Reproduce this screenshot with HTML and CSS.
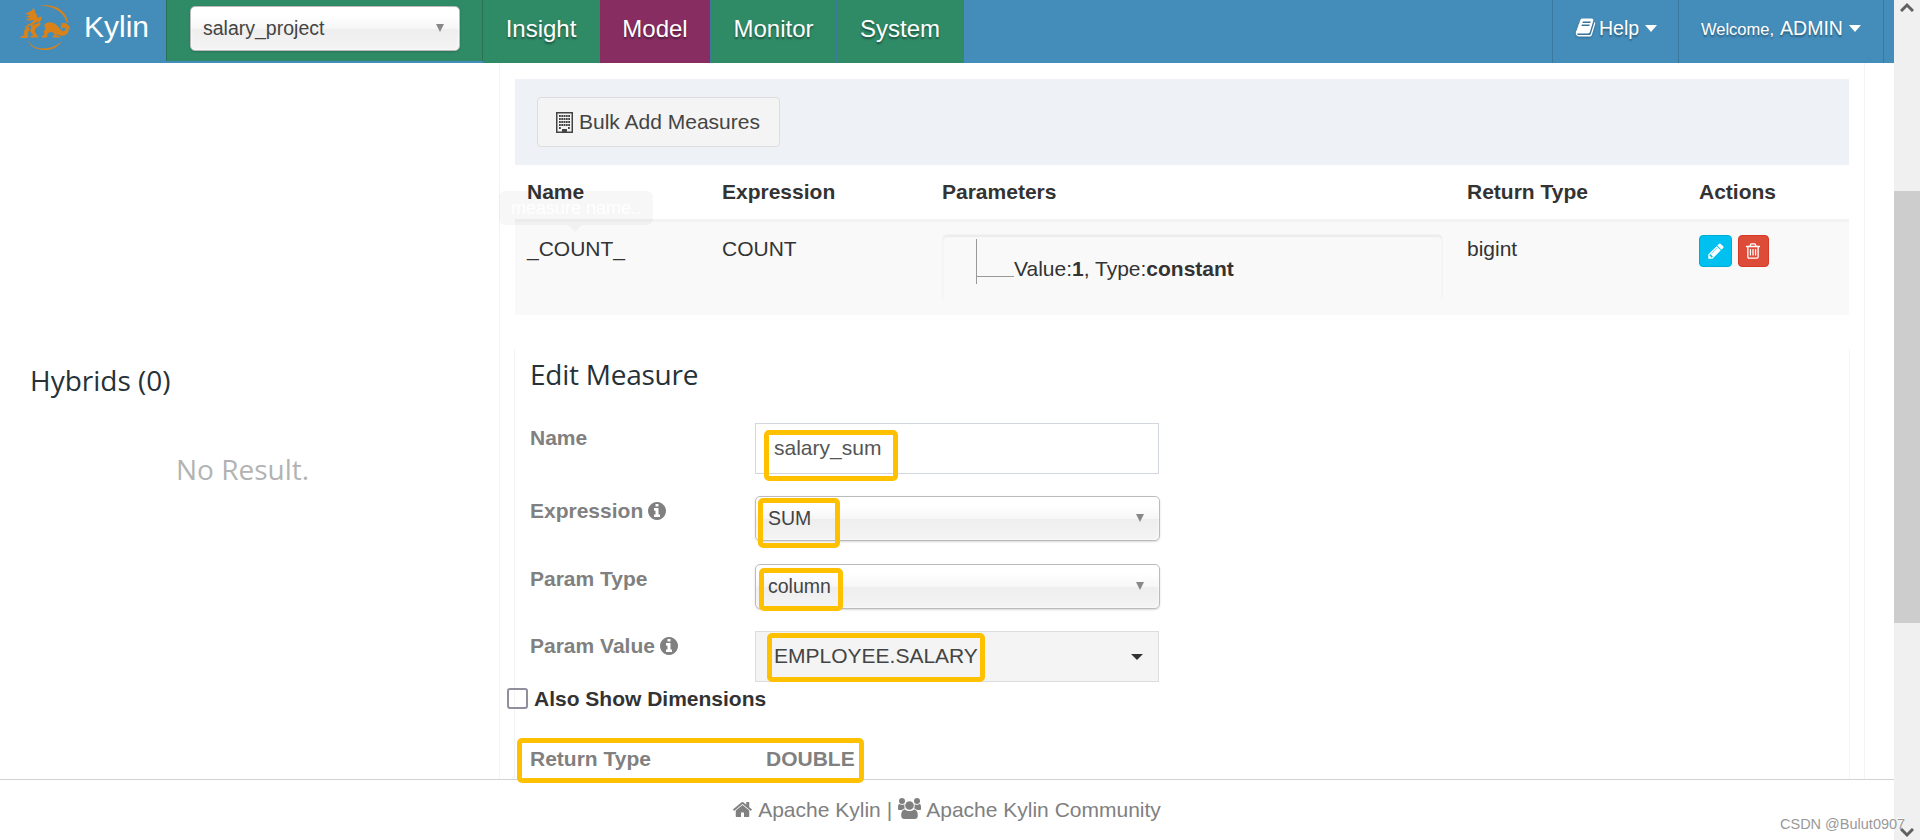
FILE: index.html
```html
<!DOCTYPE html>
<html lang="en">
<head>
    <meta charset="UTF-8">
    <meta name="viewport" content="width=device-width, initial-scale=1.0">
    <title>Kylin</title>
    <link rel="stylesheet" href="styles.css">
</head>
<body>
    <div class="app">
        <div class="page">
            <header class="navbar">
                <a class="brand">
                    <svg class="logo" viewBox="60 13 152 140" fill="#d98219">
                        <path d="M118 19c35-9 72 6 82 37 2 5 4 9 4 13l-5-2C191 38 160 16 118 19z"/>
                        <path d="M82 118c9 23 37 31 62 26 17-3 31-10 40-20-11 20-33 27-53 26-24-1-45-12-49-32z"/>
                        <path d="M76 42l17-8 8-9 5 14c4 5 6 10 5 16l13-5c2 8-2 14-7 17 7 1 4 10-3 13-8 4-12 10-9 17 2 6 9 9 10 16h-24l1-5 8-2c-5-5-9-9-10-15-6 4-8 11-5 17l-3 6H61l2-5 10-3c-3-9 0-18 7-23l-8-1c8-4 11-9 19-11 6-3 9-6 8-11-8 4-16 4-21-2l14-1-15-7 14-3z"/>
                        <path d="M133 74c9-9 24-8 34 0 9 7 13 16 21 20 6 1 9-6 5-10-4-3-8 0-9 4-6-9 2-18 11-15 13 4 13 24 3 31-8 6-20 5-28-2l-1 4 12 5v2h-24l1-5 6-3c-3-7-9-10-16-8-6 3-8 8-6 13l-3 3h-15l1-5 8-3c-3-7-2-14 4-19-3-3-5-8-4-12z"/>
                        <path d="M180 74c5-5 15-6 21-1 7 5 9 12 8 19-5-12-16-18-29-18z"/>
                        <path d="M95 75c10-5 17-10 22-9-4 8-14 8-22 9zM81 79c10 3 8 12 2 18 9-4 13-14 9-20z" fill="#448dba"/>
                    </svg>
                    <span>Kylin</span>
                </a>
                <div class="project-picker">
                    <div class="chosen">
                        <span>salary_project</span>
                        <i class="chosen-arrow"></i>
                    </div>
                </div>
                <nav class="tabs">
                    <a class="tab tab-insight">Insight</a>
                    <a class="tab tab-model active">Model</a>
                    <a class="tab tab-monitor">Monitor</a>
                    <a class="tab tab-system">System</a>
                </nav>
                <div class="user-menu">
                    <a class="menu-help">
                        <svg class="icon" viewBox="0 0 1792 1792"><path d="M1703 478q40 57 18 129l-275 906q-19 64-76.5 107.5t-122.5 43.5h-923q-77 0-148.5-53.5t-99.5-131.5q-24-67-2-127 0-4 3-27t4-37q1-8-3-21.5t-3-19.5q2-11 8-21t16.5-23.5 16.5-23.5q23-38 45-91.5t30-91.5q3-10 .5-30t-.5-28q3-11 17-28t17-23q21-36 42-92t25-90q1-9-2.5-32t.5-28q4-13 22-30.5t22-22.5q19-26 42.5-84.5t27.5-96.5q1-8-3-25.5t-2-26.5q2-8 9-18t18-23 17-21q8-12 16.5-30.5t15-35 16-36 19.5-32 26.5-23.5 36-11.5 47.5 5.5l-1 3q38-9 51-9h761q74 0 114 56t18 130l-274 906q-36 119-71.5 153.5t-128.5 34.5h-869q-27 0-38 15-11 16-1 43 24 70 144 70h923q29 0 56-15.5t35-41.5l300-987q7-22 5-57 38 15 59 43zm-1064 2q-4 13 2 22.5t20 9.5h608q13 0 25.5-9.5t16.5-22.5l21-64q4-13-2-22.5t-20-9.5h-608q-13 0-25.5 9.5t-16.5 22.5zm-83 256q-4 13 2 22.5t20 9.5h608q13 0 25.5-9.5t16.5-22.5l21-64q4-13-2-22.5t-20-9.5h-608q-13 0-25.5 9.5t-16.5 22.5z"/></svg>
                        <span>Help</span>
                        <i class="caret"></i>
                    </a>
                    <a class="menu-user">
                        <small>Welcome,</small>
                        <span>ADMIN</span>
                        <i class="caret"></i>
                    </a>
                </div>
            </header>

            <main class="content">
                <aside class="sidebar">
                    <h3>Hybrids (0)</h3>
                    <p class="no-result">No Result.</p>
                </aside>

                <section class="panel">
                    <div class="toolbar">
                        <button class="btn-default">
                            <svg class="icon-building" viewBox="0 0 17 21">
                                <path d="M0 0h17v21H0zM1.500 1.500v18H6V17h5v2.500h4.500v-18z" fill-rule="evenodd"/>
                                <path d="M6 17h5v4H6z"/>
                                <path d="M3 4h11M3 7h11M3 10h11M3 13h11M3 16h2M12 16h2" stroke="currentColor" stroke-width="1.800" stroke-dasharray="1.800 .5"/>
                            </svg>
                            <span>Bulk Add Measures</span>
                        </button>
                    </div>

                    <table class="measures">
                        <thead>
                            <tr>
                                <th class="col-name">Name</th>
                                <th class="col-expression">Expression</th>
                                <th class="col-params">Parameters</th>
                                <th class="col-return">Return Type</th>
                                <th>Actions</th>
                            </tr>
                        </thead>
                        <tbody>
                            <tr>
                                <td>
                                    <div class="name-cell">_COUNT_<span class="tooltip">measure name..</span></div>
                                </td>
                                <td>COUNT</td>
                                <td>
                                    <div class="well">
                                        <div class="tree">
                                            <span class="branch"></span>
                                            <span class="leaf">Value:<b>1</b>, Type:<b>constant</b></span>
                                        </div>
                                    </div>
                                </td>
                                <td>bigint</td>
                                <td>
                                    <div class="actions">
                                        <button class="btn-xs btn-info"><svg viewBox="0 0 1792 1792"><path d="M491 1536l91-91-235-235-91 91v107h128v128h107zm523-928q0-22-22-22-10 0-17 7l-542 542q-7 7-7 17 0 22 22 22 10 0 17-7l542-542q7-7 7-17zm-54-192l416 416-832 832h-416v-416zm683 96q0 53-37 90l-166 166-416-416 166-165q36-38 90-38 53 0 91 38l235 234q37 39 37 91z"/></svg></button>
                                        <button class="btn-xs btn-danger"><svg viewBox="0 0 1792 1792"><path d="M704 736v576q0 14-9 23t-23 9h-64q-14 0-23-9t-9-23v-576q0-14 9-23t23-9h64q14 0 23 9t9 23zm256 0v576q0 14-9 23t-23 9h-64q-14 0-23-9t-9-23v-576q0-14 9-23t23-9h64q14 0 23 9t9 23zm256 0v576q0 14-9 23t-23 9h-64q-14 0-23-9t-9-23v-576q0-14 9-23t23-9h64q14 0 23 9t9 23zm128 724v-948h-896v948q0 22 7 40.500t14.500 27 10.500 8.500h832q3 0 10.500-8.500t14.500-27 7-40.500zm-672-1076h448l-48-117q-7-9-17-11h-317q-10 2-17 11zm928 32v64q0 14-9 23t-23 9h-96v948q0 83-47 143.500t-113 60.500h-832q-66 0-113-58.500t-47-141.500v-952h-96q-14 0-23-9t-9-23v-64q0-14 9-23t23-9h309l70-167q15-37 54-63t79-26h320q40 0 79 26t54 63l70 167h309q14 0 23 9t9 23z"/></svg></button>
                                    </div>
                                </td>
                            </tr>
                        </tbody>
                    </table>

                    <form class="edit-box">
                        <h3>Edit Measure</h3>
                        <div class="form-row row-name">
                            <label>Name</label>
                            <div class="control input">salary_sum<i class="mark mark-name"></i></div>
                        </div>
                        <div class="form-row row-expression">
                            <label>Expression
                                <svg class="icon-info" viewBox="128 128 1536 1536"><path d="M1152 1376v-160q0-14-9-23t-23-9h-96v-512q0-14-9-23t-23-9h-320q-14 0-23 9t-9 23v160q0 14 9 23t23 9h96v320h-96q-14 0-23 9t-9 23v160q0 14 9 23t23 9h448q14 0 23-9t9-23zm-128-896v-160q0-14-9-23t-23-9h-192q-14 0-23 9t-9 23v160q0 14 9 23t23 9h192q14 0 23-9t9-23zm640 416q0 209-103 385.500t-279.500 279.500-385.500 103-385.500-103-279.500-279.500-103-385.500 103-385.500 279.500-279.500 385.500-103 385.500 103 279.500 279.500 103 385.500z"/></svg>
                            </label>
                            <div class="control chosen">
                                <span>SUM</span>
                                <i class="chosen-arrow"></i>
                                <i class="mark mark-sum"></i>
                            </div>
                        </div>
                        <div class="form-row row-type">
                            <label>Param Type</label>
                            <div class="control chosen">
                                <span>column</span>
                                <i class="chosen-arrow"></i>
                                <i class="mark mark-column"></i>
                            </div>
                        </div>
                        <div class="form-row row-value">
                            <label>Param Value
                                <svg class="icon-info" viewBox="128 128 1536 1536"><path d="M1152 1376v-160q0-14-9-23t-23-9h-96v-512q0-14-9-23t-23-9h-320q-14 0-23 9t-9 23v160q0 14 9 23t23 9h96v320h-96q-14 0-23 9t-9 23v160q0 14 9 23t23 9h448q14 0 23-9t9-23zm-128-896v-160q0-14-9-23t-23-9h-192q-14 0-23 9t-9 23v160q0 14 9 23t23 9h192q14 0 23-9t9-23zm640 416q0 209-103 385.500t-279.500 279.500-385.500 103-385.500-103-279.500-279.500-103-385.500 103-385.500 279.500-279.500 385.500-103 385.500 103 279.500 279.500 103 385.500z"/></svg>
                            </label>
                            <div class="control input dropdown">
                                <span>EMPLOYEE.SALARY</span>
                                <i class="caret"></i>
                                <i class="mark mark-value"></i>
                            </div>
                        </div>
                        <div class="check-row">
                            <span class="checkbox"></span>
                            <span>Also Show Dimensions</span>
                        </div>
                        <div class="form-row row-return">
                            <label>Return Type</label>
                            <label class="return-value">DOUBLE</label>
                            <i class="mark mark-return"></i>
                        </div>
                    </form>
                </section>
            </main>

            <footer class="footer">
                <svg class="icon-home" viewBox="0 0 1792 1792"><path d="M1472 992v480q0 26-19 45t-45 19h-384v-384h-256v384h-384q-26 0-45-19t-19-45v-480q0-1 .5-3t.5-3l575-474 575 474q1 2 1 6zm223-69l-62 74q-8 9-21 11h-3q-13 0-21-7l-692-577-692 577q-12 8-24 7-13-2-21-11l-62-74q-8-10-7-23.500t11-21.500l719-599q32-26 76-26t76 26l244 204v-195q0-14 9-23t23-9h192q14 0 23 9t9 23v408l219 182q10 8 11 21.500t-7 23.500z"/></svg>
                <span>Apache Kylin</span>
                <span class="divider">|</span>
                <svg class="icon-users" viewBox="0 0 23 21">
                    <circle cx="4" cy="3" r="3"/>
                    <circle cx="19" cy="3" r="3"/>
                    <path d="M0 11.500V9c0-2 .6-3 1.600-3 1.600 1.100 3.400 1.100 5 .3C6 8 6.300 9.500 7 10.500c-1.100 0-2 .5-2.800 1.500H1c-.6 0-1-.2-1-.5zM23 11.500V9c0-2-.6-3-1.600-3-1.600 1.100-3.400 1.100-5 .3.600 1.700.3 3.200-.4 4.200 1.100 0 2 .5 2.800 1.500H22c.6 0 1-.2 1-.5z"/>
                    <circle cx="11.500" cy="7.500" r="4.300"/>
                    <path d="M3.200 17.500c0-3.500 1.300-6 3.800-6 2.800 2 6.200 2 9 0 2.500 0 3.800 2.500 3.800 6 0 2.300-1 3.500-3 3.500H6.200c-2 0-3-1.200-3-3.500z"/>
                </svg>
                <span>Apache Kylin Community</span>
            </footer>
        </div>

        <div class="scrollbar">
            <svg viewBox="0 0 14 10"><path d="M1 9l6-6 6 6"/></svg>
            <div class="thumb"></div>
            <svg viewBox="0 0 14 10"><path d="M1 1l6 6 6-6"/></svg>
        </div>
    </div>
    <div class="watermark">CSDN @Bulut0907</div>
</body>
</html>
```

FILE: styles.css
```css
* { box-sizing: border-box; }
body { margin: 0; font-family: "Liberation Sans", Arial, sans-serif; font-size: 21px; line-height: 30px; color: #333; background: #fff; overflow: hidden; }
h3 { margin: 0; font-family: "Open Sans", "Segoe UI", sans-serif; font-weight: 400; font-size: 28px; line-height: 36px; color: #263238; }
.app { display: flex; width: 1920px; height: 840px; }
.page { display: flex; flex-direction: column; width: 1894px; }

/* top bar */
.navbar { display: flex; height: 63px; background: #448dba; color: #fff; }
.brand { display: flex; width: 166px; padding: 4px 0 0 20px; font-size: 30px; line-height: 45px; }
.logo { width: 51px; height: 47px; margin-right: 13px; }
.project-picker { width: 317px; height: 61px; padding: 6px 22px 6px 23px; background: #2f8a66; border-left: 1px solid #2a7056; border-right: 1px solid #2a7056; }
.tabs { display: flex; font-size: 24px; line-height: 57px; text-shadow: 0 2px 2px rgba(0,0,0,0.4); }
.tab { border-right: 1px solid #3b7a9c; background: #2f8a66; text-align: center; }
.tab.active { background: #872d62; }
.tab-insight { width: 117px; }
.tab-model { width: 111px; }
.tab-monitor { width: 126px; }
.tab-system { width: 127px; }
.user-menu { display: flex; margin-left: auto; margin-right: 10px; font-size: 19.5px; line-height: 57px; text-shadow: 0 2px 2px rgba(0,0,0,0.35); border-right: 1px solid #3a789e; }
.user-menu a { display: flex; align-items: baseline; border-left: 1px solid #3a789e; }
.menu-help { width: 126px; padding-left: 22px; }
.menu-user { width: 205px; padding-left: 22px; }
.menu-user small { font-size: 16.5px; margin-right: 6px; }
.icon { width: 21px; height: 21px; margin-right: 3px; fill: #fff; align-self: flex-start; margin-top: 17px; filter: drop-shadow(0 1px 1px rgba(0,0,0,0.3)); }
.caret { width: 0; height: 0; border: 6px solid transparent; border-top: 7px solid currentColor; border-bottom: 0; margin-left: 6px; align-self: flex-start; margin-top: 25px; }

/* select boxes */
.chosen { position: relative; display: flex; justify-content: space-between; height: 45px; padding: 0 15px 0 12px; border: 1px solid #bbb; border-radius: 5px; font-size: 19.5px; line-height: 42px; color: #444; background: linear-gradient(#fff 20%, #f6f6f6 50%, #eee 52%, #f4f4f4 100%); box-shadow: 0 0 3px #fff inset, 0 1px 2px rgba(0,0,0,0.15); }
.chosen-arrow { width: 0; height: 0; border: 4.5px solid transparent; border-top: 8px solid #888; border-bottom: 0; margin-top: 17px; }

/* main area */
.content { display: flex; height: 716px; }
.sidebar { width: 499px; padding: 299px 0 0 30px; }
.no-result { margin: 53px 0 0 146px; font-family: "Open Sans", "Segoe UI", sans-serif; font-size: 28px; line-height: 36px; color: #b3b3b3; }
.panel { width: 1366px; padding: 16px 15px 0; border: 1px solid #f4f4f4; border-top: 0; border-bottom: 0; }
.toolbar { height: 86px; padding: 18px 22px; background: #eef1f6; }
.btn-default { display: flex; align-items: center; gap: 6px; width: 243px; height: 50px; padding: 0 0 0 18px; border: 1px solid #ddd; border-radius: 4px; background: #f4f4f4; font: inherit; color: #444; }
.icon-building { width: 17px; height: 21px; fill: #444; }

.measures { width: 1334px; table-layout: fixed; border-collapse: separate; border-spacing: 0; }
.measures th { height: 57px; padding: 12px; border-bottom: 3px solid #f3f3f3; text-align: left; vertical-align: top; }
.measures td { height: 93px; padding: 12px 12px 0; background: #f9f9f9; vertical-align: top; }
.col-name { width: 195px; }
.col-expression { width: 220px; }
.col-params { width: 525px; }
.col-return { width: 232px; }
.name-cell { position: relative; }
.tooltip { position: absolute; left: -28px; top: -43px; width: 154px; height: 34px; border-radius: 6px; background: rgba(0,0,0,0.03); color: #fff; font-size: 18px; line-height: 34px; text-align: center; }
.tooltip::after { content: ""; position: absolute; left: 69px; top: 34px; border: 7px solid transparent; border-top-color: rgba(0,0,0,0.03); border-bottom: 0; }
.well { height: 66px; padding: 4px 0 0 33px; border-radius: 5px; box-shadow: inset 0 2px 2px rgba(0,0,0,0.06); border: 1px solid #f3f3f3; border-bottom: 0; }
.tree { display: flex; height: 45px; border-left: 1px solid #999; }
.branch { width: 37px; height: 38px; border-bottom: 1px solid #999; }
.leaf { padding-top: 15px; }
.actions { display: flex; gap: 6px; padding-top: 1px; }
.btn-xs { display: flex; align-items: center; justify-content: center; height: 32px; padding: 0; border-radius: 4px; }
.btn-xs svg { width: 18px; height: 18px; fill: #fff; }
.btn-info { width: 33px; background: #00c0ef; border: 1px solid #00acd6; }
.btn-danger { width: 31px; background: #dd4b39; border: 1px solid #d73925; }
.btn-danger svg { margin-right: 1px; }

/* edit form */
.edit-box { height: 430px; margin: 34px -1px 0; padding: 7px 0 0 15px; border: 1px solid #f4f4f4; border-top: 0; border-bottom: 0; }
.edit-box h3 { letter-spacing: -0.25px; }
.form-row { position: relative; display: flex; width: 630px; }
.form-row label { width: 225px; font-weight: 700; color: #808080; }
.row-name { height: 73px; margin-top: 31px; }
.row-expression { height: 68px; }
.row-type { height: 67px; }
.row-value { height: 53px; }
.row-return { margin-top: 30px; }
.form-row .return-value { width: auto; padding-left: 11px; }
.icon-info { width: 18px; height: 18px; margin-left: -1px; fill: #808080; vertical-align: -2px; }
.control { position: relative; width: 405px; }
.input { width: 404px; height: 51px; padding: 9px 18px; border: 1px solid #d2d6de; color: #555; }
.dropdown { display: flex; justify-content: space-between; padding: 9px 15px 0 18px; border-color: #ddd; background: #f4f4f4; color: #444; }
.dropdown .caret { margin-top: 13px; border-top-width: 6px; color: #333; }
.check-row { display: flex; height: 30px; margin-left: -23px; font-weight: 700; }
.checkbox { width: 21px; height: 21px; margin: 4px 6px 0 0; border: 2.5px solid #8f8f9d; border-radius: 3px; }

/* yellow marks over the values */
.mark { position: absolute; border: 5px solid #ffc000; border-radius: 5px; }
.mark-name { left: 8px; top: 6px; width: 134px; height: 51px; }
.mark-sum { left: 2px; top: 1px; width: 82px; height: 50px; }
.mark-column { left: 3px; top: 3px; width: 84px; height: 43px; }
.mark-value { left: 11px; top: 1px; width: 218px; height: 49px; }
.mark-return { left: -13px; top: -6px; width: 347px; height: 45px; z-index: 2; }

.footer { display: flex; justify-content: center; height: 61px; padding-top: 15px; border-top: 1px solid #d2d2d2; color: #808080; fill: #808080; }
.icon-home { width: 21px; height: 21px; margin: 4px 5px 0 -1px; }
.divider { margin: 0 6px; }
.icon-users { width: 23px; height: 21px; margin: 3px 5px 0 0; }

.scrollbar { display: flex; flex-direction: column; align-items: center; width: 26px; padding: 2px 0; background: #f0f0f0; }
.scrollbar svg { width: 14px; height: 10px; fill: none; stroke: #606060; stroke-width: 3; }
.thumb { width: 26px; height: 432px; margin: 179px 0 205px; background: #cdcdcd; }
.watermark { position: absolute; left: 1780px; top: 814px; font-size: 14.5px; line-height: 20px; color: #999; text-shadow: -1px -1px 0 #fff; }
```
